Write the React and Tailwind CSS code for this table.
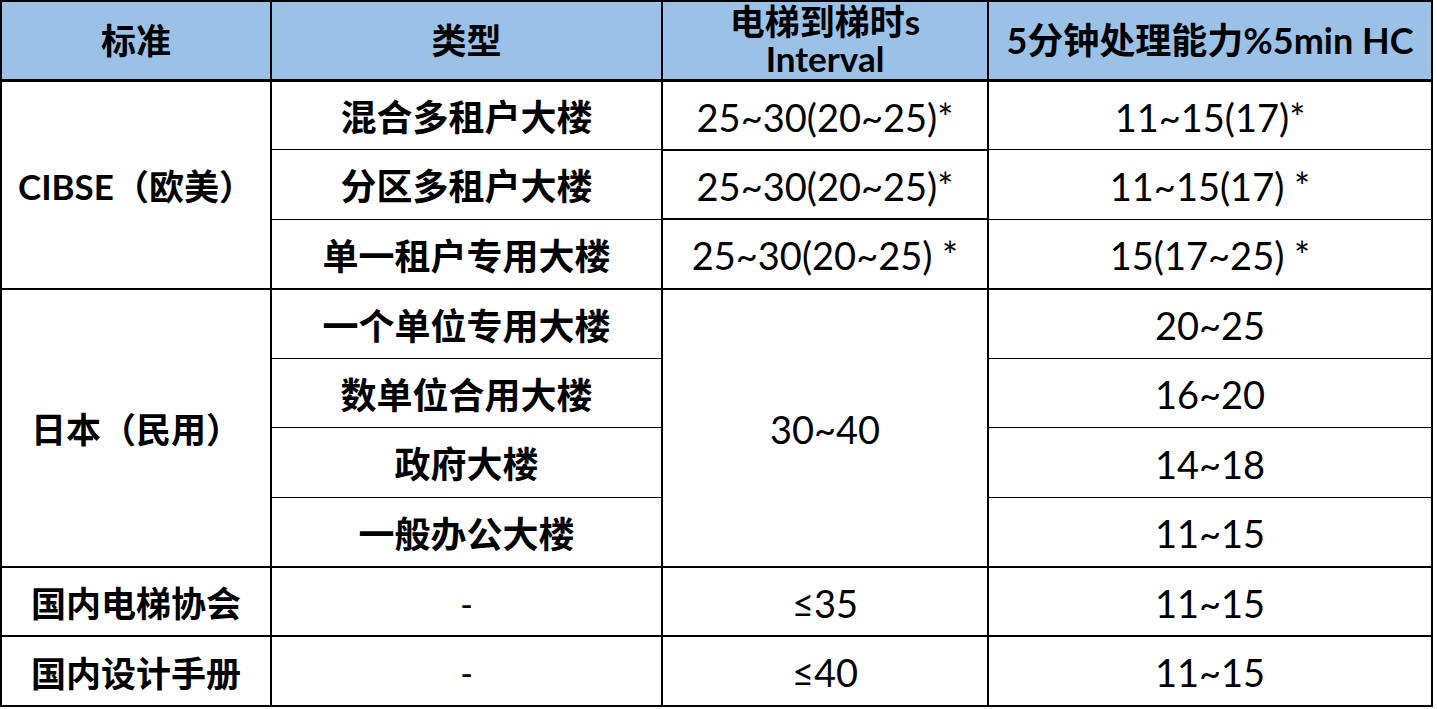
import React from 'react';

const cjk = "font-['Lato','Noto_Sans_CJK_SC',sans-serif]";

const rows = [
  { group: 'CIBSE（欧美）', span: 3, type: '混合多租户大楼', interval: '25~30(20~25)*', hc: '11~15(17)*', thick: true },
  { type: '分区多租户大楼', interval: '25~30(20~25)*', hc: '11~15(17) *' },
  { type: '单一租户专用大楼', interval: '25~30(20~25) *', hc: '15(17~25) *' },
  { group: '日本（民用）', span: 4, type: '一个单位专用大楼', interval: '30~40', intervalSpan: 4, hc: '20~25', thick: true },
  { type: '数单位合用大楼', hc: '16~20' },
  { type: '政府大楼', hc: '14~18' },
  { type: '一般办公大楼', hc: '11~15' },
  { group: '国内电梯协会', span: 1, type: '-', interval: '≤35', hc: '11~15', thick: true, dash: true },
  { group: '国内设计手册', span: 1, type: '-', interval: '≤40', hc: '11~15', thick: true, dash: true },
];

const App = () => {
  return (
    <div className={`w-[1437px] h-[709px] bg-white ${cjk} text-black`}>
      <table className="border-collapse table-fixed w-[1431px] border-2 border-black">
        <colgroup>
          <col className="w-[270px]" />
          <col className="w-[391px]" />
          <col className="w-[326px]" />
          <col className="w-[444px]" />
        </colgroup>
        <thead>
          <tr className="h-[79px] bg-[#9bc2e6] border-b-[3px] border-black">
            <th className="border-2 border-black text-[35px] font-bold">标准</th>
            <th className="border-2 border-black text-[35px] font-bold">类型</th>
            <th className="border-2 border-black text-[35px] font-bold leading-[37px]">
              电梯到梯时s
              <br />
              Interval
            </th>
            <th className="border-2 border-black text-[36px] font-bold">5分钟处理能力%5min HC</th>
          </tr>
        </thead>
        <tbody>
          {rows.map((r, i) => (
            <tr
              key={i}
              className={`h-[69.5px] ${r.thick ? 'border-t-2' : 'border-t'} border-black`}
            >
              {r.group && (
                <td rowSpan={r.span} className="border-2 border-black text-center text-[35px] font-bold pt-1">
                  {r.group}
                </td>
              )}
              <td className={`border-x-2 border-black text-center pt-1 ${r.dash ? 'text-[34px]' : 'text-[36px] font-bold'}`}>
                {r.type}
              </td>
              {(r.interval !== undefined) && (
                <td
                  rowSpan={r.intervalSpan || 1}
                  className="border-2 border-black text-center text-[38px] pt-1"
                >
                  {r.interval}
                </td>
              )}
              <td className="border-x-2 border-black text-center text-[38px] pt-1">{r.hc}</td>
            </tr>
          ))}
        </tbody>
      </table>
    </div>
  );
};

export default App;
